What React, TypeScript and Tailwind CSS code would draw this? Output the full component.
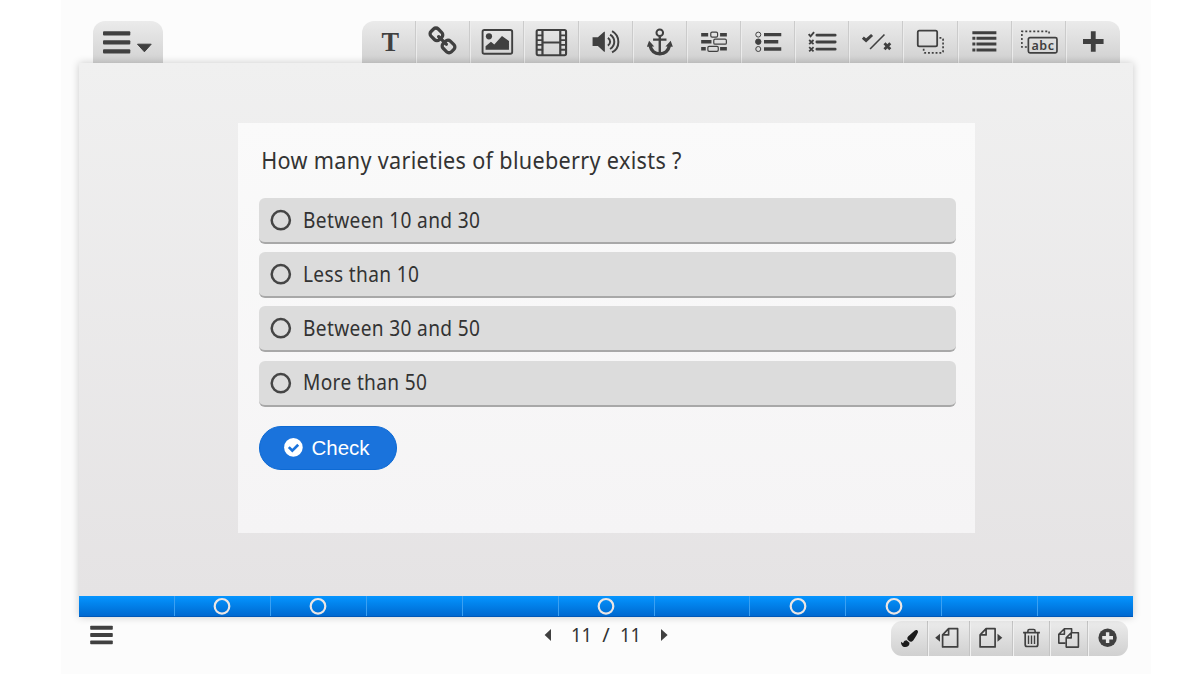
import type { ReactNode } from "react";
import { FaPaintBrush } from "react-icons/fa";

const INK = "#404040";

/* Toolbar glyphs, drawn on a canvas centred on the button */
const tools: { name: string; art: ReactNode }[] = [
  {
    name: "Text",
    art: (
      <text x="1.3" y="9" textAnchor="middle" className="font-['Liberation_Serif',serif] text-[28px] font-bold" stroke="none" textLength="17.6" lengthAdjust="spacingAndGlyphs">
        T
      </text>
    ),
  },
  {
    name: "Link",
    art: (
      <path
        stroke="none"
        transform="translate(0.5 -0.5) scale(0.0172) translate(-896 -896)"
        d="M1456 1216q0-40-28-68l-208-208q-28-28-68-28-42 0-72 32 3 3 19 18.5t21.5 21.5 15 19 13 25.5 3.5 27.5q0 40-28 68t-68 28q-15 0-27.5-3.5t-25.5-13-19-15-21.5-21.5-18.5-19q-33 31-33 73 0 40 28 68l206 207q27 27 68 27 40 0 68-26l147-146q28-28 28-67zm-703-705q0-40-28-68l-206-207q-28-28-68-28-39 0-68 27l-147 146q-28 28-28 67 0 40 28 68l208 208q27 27 68 27 42 0 72-31-3-3-19-18.5t-21.5-21.5-15-19-13-25.5-3.5-27.5q0-40 28-68t68-28q15 0 27.5 3.5t25.5 13 19 15 21.5 21.5 18.5 19q33-31 33-73zm895 705q0 120-85 203l-147 146q-83 83-203 83-121 0-204-85l-206-207q-83-83-83-203 0-123 88-209l-88-88q-86 88-208 88-120 0-204-84l-208-208q-84-84-84-204t85-203l147-146q83-83 203-83 121 0 204 85l206 207q83 83 83 203 0 123-88 209l88 88q86-88 208-88 120 0 204 84l208 208q84 84 84 204z"
      />
    ),
  },
  {
    name: "Image",
    art: (
      <>
        <rect x="-14.5" y="-12" width="29.6" height="23.8" rx="1.8" fill="none" strokeWidth="1.9" />
        <circle cx="-8.1" cy="-5.7" r="3.1" stroke="none" />
        <path d="M-11.5 7.8V4.2L-6.1 -0.2L-2.8 2.4L4.9 -6L11.9 -1V7.8Z" stroke="none" />
      </>
    ),
  },
  {
    name: "Video",
    art: (
      <>
        <rect x="-14.4" y="-12" width="29.4" height="25.2" rx="1.6" fill="none" strokeWidth="2.1" />
        <path d="M-8.6 -12V13M9.2 -12V13M-8 0.5H9" fill="none" strokeWidth="2.2" />
        <path d="M-14.6 -6.6H-8M-14.6 -1.9H-8M-14.6 2.9H-8M-14.6 7.7H-8M9 -6.6H15M9 -1.9H15M9 2.9H15M9 7.7H15" fill="none" strokeWidth="1.9" />
      </>
    ),
  },
  {
    name: "Sound",
    art: (
      <>
        <path d="M-13.5 -4.7H-8.2L-2 -10.2H-1.2V9.8H-2L-8.2 4H-13.5Z" stroke="none" />
        <path d="M1.8 -4.2C4.8 -2.2 4.8 1.6 1.8 3.6M4 -7.4C9.6 -4 9.6 3.4 4 7M6 -10.8C14.4 -6 14.4 5.8 6 10.4" fill="none" strokeWidth="2" />
      </>
    ),
  },
  {
    name: "Anchor",
    art: (
      <>
        <circle cx="-0.3" cy="-9.3" r="3.3" fill="none" strokeWidth="2" />
        <path d="M-0.3 -5.5V12M-7 -2.4H6.4" fill="none" strokeWidth="2.4" />
        <path d="M-9.9 4C-8.8 9 -4.8 11.6 -0.3 11.9C4.2 11.6 8.2 9 9.3 4" fill="none" strokeWidth="3.4" />
        <path d="M-13.2 4.8L-11 -1.2L-5.8 4.6ZM12.8 4.8L10.6 -1.2L5.4 4.6Z" stroke="none" />
      </>
    ),
  },
  {
    name: "Fill in the blanks",
    art: (
      <>
        <path d="M-12.9 -7.3H-5.9M6 -7.3H12.8M-12.9 -0.3H-2.6M-12.9 6.8H-8.3M6 6.8H12.8" fill="none" strokeWidth="3.5" />
        <g fill="none" strokeWidth="1.2">
          <rect x="-3.3" y="-9.9" width="6.8" height="5" rx="1.3" />
          <rect x="-0.3" y="-2.8" width="12.6" height="5" rx="1.3" />
          <rect x="-6.2" y="4.3" width="10.4" height="5" rx="1.3" />
        </g>
      </>
    ),
  },
  {
    name: "Single choice",
    art: (
      <>
        <g strokeWidth="1">
          <circle cx="-9.8" cy="-7.4" r="2.5" fill="none" />
          <circle cx="-9.8" cy="-0.3" r="2.7" />
          <circle cx="-9.8" cy="7" r="2.5" fill="none" />
        </g>
        <path d="M-4.1 -7.4H13.2M-4.1 -0.3H10.2M-4.1 7H13.2" fill="none" strokeWidth="3.4" />
      </>
    ),
  },
  {
    name: "Multiple choice",
    art: (
      <>
        <path d="M-5.2 -6.8H13.1M-5.2 0H13.1M-5.2 7.2H13.1" fill="none" strokeWidth="2.8" strokeLinecap="round" />
        <path d="M-13.4 -7.8L-11.5 -5.6L-8 -9.8" fill="none" strokeWidth="1.9" />
        <path d="M-12.9 -2L-8.5 2.2M-8.5 -2L-12.9 2.2M-12.9 5.2L-8.5 9.4M-8.5 5.2L-12.9 9.4" fill="none" strokeWidth="1.8" />
      </>
    ),
  },
  {
    name: "True or false",
    art: (
      <>
        <path d="M-13.2 -4.4L-10 -1.6L-4 -7" fill="none" strokeWidth="3" />
        <path d="M-6 7L8.4 -7.5" fill="none" strokeWidth="1.6" />
        <path d="M8.4 1.3L14.2 7.3M14.2 1.3L8.4 7.3" fill="none" strokeWidth="2.8" />
      </>
    ),
  },
  {
    name: "Group",
    art: (
      <>
        <rect x="-12.3" y="-11.3" width="19.4" height="15.6" rx="1.6" fill="none" strokeWidth="1.8" />
        <path d="M9.4 -4.2H11.6Q13 -4.2 13 -3V9.6Q13 10.9 11.8 10.9H-5Q-6.4 10.9 -6.4 9.6V6" fill="none" strokeWidth="1.7" strokeDasharray="1.9 1.9" />
      </>
    ),
  },
  {
    name: "List",
    art: (
      <path d="M-12.7 -9.2H11.3M-12.7 -3.7H-9.7M-8.6 -3.7H11.3M-12.7 2H-9.7M-8.6 2H11.3M-12.7 7.9H-9.7M-8.6 7.9H11.3" fill="none" strokeWidth="3" />
    ),
  },
  {
    name: "Text input",
    art: (
      <>
        <path d="M-12.2 5H-17.2V-10.6H10V-6.4" fill="none" strokeWidth="1.6" strokeDasharray="2 2" />
        <rect x="-10.7" y="-4.3" width="28.6" height="15.2" rx="1.6" fill="none" strokeWidth="1.7" />
        <text x="3.6" y="7.8" textAnchor="middle" textLength="22.6" className="font-['Noto_Sans',sans-serif] text-[12.5px] font-semibold" stroke="none">
          abc
        </text>
      </>
    ),
  },
  {
    name: "Add",
    art: <path d="M0.2 -8.4V7.4M-7.7 -0.5H8.1" fill="none" strokeWidth="4.8" strokeLinecap="square" />,
  },
];

function PageOutline({ x }: { x: number }) {
  return (
    <path d={`M${x + 6} -9.8H${x + 15}V8.4H${x}V-3.6ZM${x + 6} -9.8V-3.6H${x}`} fill="none" strokeWidth="1.7" strokeLinejoin="round" />
  );
}

const pageActions: { name: string; width: string; half: number; art: ReactNode }[] = [
  {
    name: "Previous",
    width: "w-[42px]",
    half: 21,
    art: (
      <>
        <path d="M-13.8 -0.8L-9 -4.8V3.2Z" stroke="none" />
        <PageOutline x={-6.4} />
      </>
    ),
  },
  {
    name: "Next",
    width: "w-[43px]",
    half: 21.5,
    art: (
      <>
        <PageOutline x={-11.4} />
        <path d="M10.8 -0.8L6 -4.8V3.2Z" stroke="none" />
      </>
    ),
  },
  {
    name: "Delete",
    width: "w-[37px]",
    half: 18.5,
    art: (
      <g fill="none">
        <path d="M-8.4 -5.9H8.4M-3.6 -6V-7.6Q-3.6 -9 -2.2 -9H2.2Q3.6 -9 3.6 -7.6V-6" strokeWidth="1.6" />
        <path d="M-6.3 -5.5V6Q-6.3 8 -4.6 8H4.6Q6.3 8 6.3 6V-5.5" strokeWidth="1.7" />
        <path d="M-3 -3V5.4M0 -3V5.4M3 -3V5.4" strokeWidth="1.4" />
      </g>
    ),
  },
  {
    name: "Duplicate",
    width: "w-[38px]",
    half: 19,
    art: (
      <g fill="none" strokeWidth="1.6" strokeLinejoin="round">
        <path d="M2.6 -6.4V-9.8H-4.6L-10.2 -4.2V4.6H-3.4M-4.6 -9.8V-4.2H-10.2" />
        <path d="M2.2 -5.8H9.4V8.6H-2.8V-0.6ZM2.2 -5.8V-0.6H-2.8" />
      </g>
    ),
  },
  {
    name: "Add page",
    width: "w-[40px]",
    half: 20,
    art: (
      <>
        <circle cx="-0.4" cy="-0.8" r="9.2" stroke="none" />
        <path d="M-0.4 -6.2V4.6M-5.8 -0.8H5" stroke="#e8e8e8" strokeWidth="3.4" fill="none" />
      </>
    ),
  },
];

const answers = ["Between 10 and 30", "Less than 10", "Between 30 and 50", "More than 50"];
const marked = [false, true, true, false, false, true, false, true, true, false, false];

export default function App() {
  return (
    <div className="h-[675px] w-[1200px] overflow-hidden bg-white pl-[61px] font-['Noto_Sans',sans-serif] text-[#333]">
      <div className="flex h-[674px] w-[1090px] flex-col bg-[#fcfcfc] pl-[18px] pt-[21px]">
        <header className="flex h-[42px] w-[1054px] justify-between pl-[14px] pr-[13px]">
          <button aria-label="Menu" className="flex w-[70px] rounded-t-xl bg-linear-to-b from-[#ebebeb] to-[#d2d2d2]">
            <svg viewBox="0 0 70 42" className="h-[42px] w-[70px]" fill={INK}>
              <rect x="10" y="10.2" width="27.3" height="4.4" rx="1" />
              <rect x="10" y="19.2" width="27.3" height="4.4" rx="1" />
              <rect x="10" y="28.2" width="27.3" height="4.4" rx="1" />
              <path d="M44.5 23.2H58.2L51.4 30.8Z" stroke={INK} strokeLinejoin="round" />
            </svg>
          </button>
          <nav className="flex w-[758px] overflow-hidden rounded-t-xl bg-linear-to-b from-[#ebebeb] to-[#d0d0d0]">
            {tools.map((tool, i) => (
              <button
                key={tool.name}
                aria-label={tool.name}
                className={i === 0 ? "min-w-0 flex-1" : "min-w-0 flex-1 shadow-[inset_1px_0_0_#ececec,-1px_0_0_#cbcbcb]"}
              >
                <svg viewBox="-27 -21 54 42" className="h-[42px] w-full" fill={INK} stroke={INK}>
                  {tool.art}
                </svg>
              </button>
            ))}
          </nav>
        </header>

        <main className="relative flex h-[554px] w-[1054px] flex-col shadow-[0_0_8px_rgba(0,0,0,0.2)]">
          <div className="flex h-[533px] justify-center bg-linear-to-b from-[#f0f0f0] to-[#e5e3e4] pt-[60px]">
            <section className="h-[410px] w-[737px] bg-linear-to-b from-[#fafafa] to-[#f5f4f5] pl-[21px]">
              <h1 className="h-[75px] origin-left scale-x-[0.9] pl-[2.5px] pt-[21px] text-[24px] leading-8 tracking-[0.36px] whitespace-nowrap">
                How many varieties of blueberry exists ?
              </h1>
              <div className="flex flex-col gap-[8.2px]">
                {answers.map((answer) => (
                  <label
                    key={answer}
                    className="flex h-[46px] w-[697px] items-center rounded-md border-b-2 border-[#a8a8a8] bg-[#dcdcdc] pl-[11px]"
                  >
                    <svg viewBox="0 0 22 22" className="size-[22px]" fill="none" stroke="#454545" strokeWidth="2.5">
                      <circle cx="10.8" cy="11.2" r="9.1" />
                    </svg>
                    <span className="ml-[11px] origin-left scale-x-[0.91] pb-px text-[21px] leading-7 tracking-[0.38px]">{answer}</span>
                  </label>
                ))}
              </div>
              <button className="mt-[19px] flex h-[44px] w-[138px] items-center rounded-full border border-[#0d6ad4] bg-[#1a73dc] pl-[24px] text-white">
                <svg viewBox="0 0 20 20" className="size-[20px]">
                  <circle cx="9.4" cy="9.4" r="9.3" fill="#fff" />
                  <path d="M4.8 9.1L8.3 12.6L14.2 6.8" fill="none" stroke="#1a73dc" strokeWidth="2.7" />
                </svg>
                <span className="pl-[8px] font-['Liberation_Sans',sans-serif] text-[20.5px] leading-6">Check</span>
              </button>
            </section>
          </div>
          <div className="flex h-[21px] border-b border-[#0058b8] bg-linear-to-b from-[#0695ff] to-[#0069d0]">
            {marked.map((hasMark, i) => (
              <div
                key={i}
                className={
                  i === 0
                    ? "flex w-[95px] items-center justify-center"
                    : "flex flex-1 items-center justify-center pl-px shadow-[inset_1px_0_0_#3ba0f2]"
                }
              >
                {hasMark && (
                  <svg viewBox="0 0 18 18" className="size-[18px]" fill="none" stroke="#ece6e4" strokeWidth="2.2">
                    <circle cx="9" cy="9.3" r="7.3" />
                  </svg>
                )}
              </div>
            ))}
          </div>
        </main>

        <footer className="flex h-[57px] w-[1054px] pt-[3px]">
          <svg viewBox="0 0 35 36" className="h-[36px] w-[35px]" fill={INK}>
            <rect x="11.2" y="5.8" width="22.6" height="3.9" rx="0.8" />
            <rect x="11.2" y="13.1" width="22.6" height="3.9" rx="0.8" />
            <rect x="11.2" y="20.4" width="22.6" height="3.9" rx="0.8" />
          </svg>
          <div className="ml-[430px] flex h-[30px] w-[124px] items-center justify-between">
            <svg viewBox="0 0 8 12" className="h-[12px] w-[8px]" fill={INK}>
              <path d="M0.6 6L7 0V12Z" />
            </svg>
            <span className="flex h-[28px] items-center gap-[9px] text-[20px] leading-7">
              <span className="inline-block scale-x-[0.92]">11</span>
              <span>/</span>
              <span className="inline-block scale-x-[0.92]">11</span>
            </span>
            <svg viewBox="0 0 8 12" className="h-[12px] w-[8px]" fill={INK}>
              <path d="M7.6 6L1 0V12Z" />
            </svg>
          </div>
          <div className="ml-[223px] mt-px flex h-[35px] w-[237px] overflow-hidden rounded-[11px] bg-linear-to-b from-[#ececec] to-[#d0d0d0]">
            <button aria-label="Style" className="flex w-[37px] shrink-0 items-center justify-center text-[#1c1c1c]">
              <FaPaintBrush className="size-[17px]" />
            </button>
            {pageActions.map((action) => (
              <button
                key={action.name}
                aria-label={action.name}
                className={`${action.width} shrink-0 shadow-[inset_1px_0_0_#f0f0f0,-1px_0_0_#c4c4c4]`}
              >
                <svg viewBox={`${-action.half} -17.5 ${action.half * 2} 35`} className="h-[35px] w-full" fill={INK} stroke={INK}>
                  {action.art}
                </svg>
              </button>
            ))}
          </div>
        </footer>
      </div>
    </div>
  );
}
